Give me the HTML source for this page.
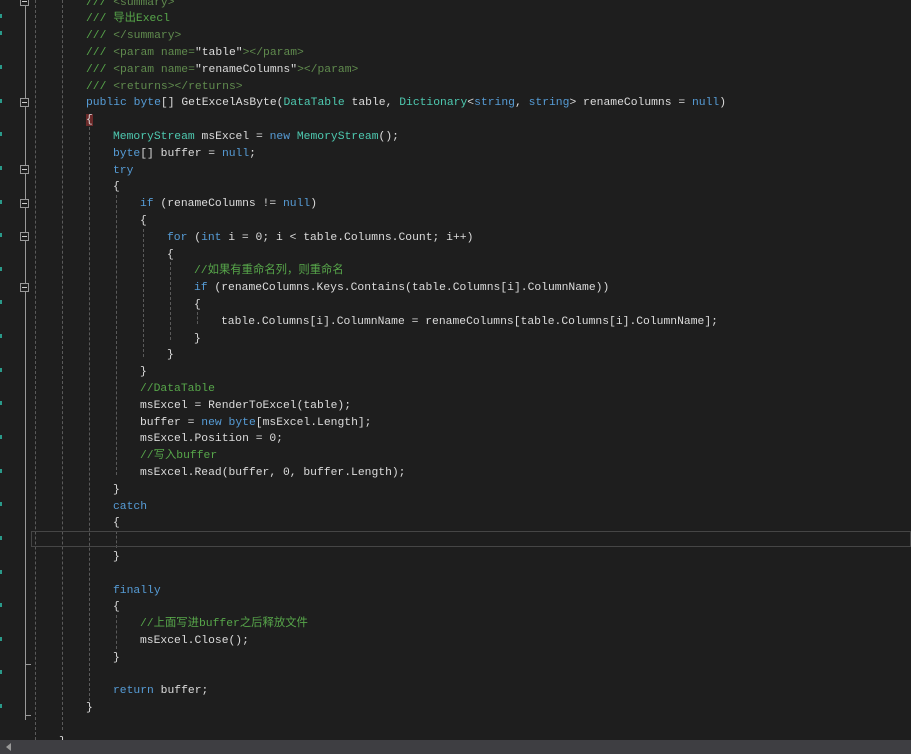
<!DOCTYPE html>
<html><head><meta charset="utf-8"><style>
body{margin:0;width:911px;height:754px;background:#1e1e1e;overflow:hidden;position:relative;font-family:"Liberation Mono","Noto Sans CJK SC",monospace;font-size:11.35px;color:#dcdcdc}
.l{position:absolute;left:0;height:16.8px;line-height:16.8px;white-space:pre;margin-top:1.5px}
.c{color:#57a64a}.k{color:#569cd6}.t{color:#4ec9b0}.g{color:#608b4e}
.gd{position:absolute;width:0;border-left:1px dashed #5a5a5a}
.fb{position:absolute;left:20px;width:9px;height:9px;border:1px solid #999;background:#1e1e1e;box-sizing:border-box}
.fb:after{content:"";position:absolute;left:1px;top:3px;width:5px;height:1px;background:#ccc}
.dot{position:absolute;left:0;width:2px;height:4px;background:#2a9a8a}
</style></head><body>
<div style="position:absolute;left:25px;top:0;width:1px;height:720px;background:#999"></div>
<div style="position:absolute;left:25px;top:664px;width:6px;height:1px;background:#999"></div>
<div style="position:absolute;left:25px;top:715px;width:6px;height:1px;background:#999"></div>
<div class="gd" style="left:35px;top:0;height:740px"></div>
<div class="gd" style="left:62px;top:0;height:730px"></div>
<div class="gd" style="left:89px;top:127px;height:574px"></div>
<div class="gd" style="left:116px;top:195px;height:280px"></div>
<div class="gd" style="left:116px;top:531px;height:17px"></div>
<div class="gd" style="left:116px;top:615px;height:34px"></div>
<div class="gd" style="left:143px;top:229px;height:128px"></div>
<div class="gd" style="left:170px;top:262px;height:78px"></div>
<div class="gd" style="left:197px;top:312px;height:12px"></div>
<div style="position:absolute;left:31px;top:531px;width:880px;height:16px;border:1px solid #464646;box-sizing:border-box"></div>
<div class="fb" style="top:-3px"></div>
<div class="fb" style="top:98px"></div>
<div class="fb" style="top:165px"></div>
<div class="fb" style="top:199px"></div>
<div class="fb" style="top:232px"></div>
<div class="fb" style="top:283px"></div>
<div class="dot" style="top:14px"></div><div class="dot" style="top:31px"></div><div class="dot" style="top:65px"></div><div class="dot" style="top:99px"></div><div class="dot" style="top:132px"></div><div class="dot" style="top:166px"></div><div class="dot" style="top:200px"></div><div class="dot" style="top:233px"></div><div class="dot" style="top:267px"></div><div class="dot" style="top:300px"></div><div class="dot" style="top:334px"></div><div class="dot" style="top:368px"></div><div class="dot" style="top:401px"></div><div class="dot" style="top:435px"></div><div class="dot" style="top:469px"></div><div class="dot" style="top:502px"></div><div class="dot" style="top:536px"></div><div class="dot" style="top:570px"></div><div class="dot" style="top:603px"></div><div class="dot" style="top:637px"></div><div class="dot" style="top:670px"></div><div class="dot" style="top:704px"></div>

<div class="l" style="top:-7px;left:86px"><span class="c">/// </span><span class="g">&lt;summary&gt;</span></div>
<div class="l" style="top:9.8px;left:86px"><span class="c">/// 导出Execl</span></div>
<div class="l" style="top:26.6px;left:86px"><span class="c">/// </span><span class="g">&lt;/summary&gt;</span></div>
<div class="l" style="top:43.4px;left:86px"><span class="c">/// </span><span class="g">&lt;param name=</span>"table"<span class="g">&gt;&lt;/param&gt;</span></div>
<div class="l" style="top:60.2px;left:86px"><span class="c">/// </span><span class="g">&lt;param name=</span>"renameColumns"<span class="g">&gt;&lt;/param&gt;</span></div>
<div class="l" style="top:77px;left:86px"><span class="c">/// </span><span class="g">&lt;returns&gt;&lt;/returns&gt;</span></div>
<div class="l" style="top:93.8px;left:86px"><span class="k">public</span> <span class="k">byte</span>[] GetExcelAsByte(<span class="t">DataTable</span> table, <span class="t">Dictionary</span>&lt;<span class="k">string</span>, <span class="k">string</span>&gt; renameColumns = <span class="k">null</span>)</div>
<div class="l" style="top:110.6px;left:86px"><span style="background:#6b2a2a">{</span></div>
<div class="l" style="top:127.4px;left:113px"><span class="t">MemoryStream</span> msExcel = <span class="k">new</span> <span class="t">MemoryStream</span>();</div>
<div class="l" style="top:144.2px;left:113px"><span class="k">byte</span>[] buffer = <span class="k">null</span>;</div>
<div class="l" style="top:161px;left:113px"><span class="k">try</span></div>
<div class="l" style="top:177.8px;left:113px">{</div>
<div class="l" style="top:194.6px;left:140px"><span class="k">if</span> (renameColumns != <span class="k">null</span>)</div>
<div class="l" style="top:211.4px;left:140px">{</div>
<div class="l" style="top:228.2px;left:167px"><span class="k">for</span> (<span class="k">int</span> i = 0; i &lt; table.Columns.Count; i++)</div>
<div class="l" style="top:245px;left:167px">{</div>
<div class="l" style="top:261.8px;left:194px"><span class="c">//如果有重命名列，则重命名</span></div>
<div class="l" style="top:278.6px;left:194px"><span class="k">if</span> (renameColumns.Keys.Contains(table.Columns[i].ColumnName))</div>
<div class="l" style="top:295.4px;left:194px">{</div>
<div class="l" style="top:312.2px;left:221px">table.Columns[i].ColumnName = renameColumns[table.Columns[i].ColumnName];</div>
<div class="l" style="top:329px;left:194px">}</div>
<div class="l" style="top:345.8px;left:167px">}</div>
<div class="l" style="top:362.6px;left:140px">}</div>
<div class="l" style="top:379.4px;left:140px"><span class="c">//DataTable</span></div>
<div class="l" style="top:396.2px;left:140px">msExcel = RenderToExcel(table);</div>
<div class="l" style="top:413px;left:140px">buffer = <span class="k">new</span> <span class="k">byte</span>[msExcel.Length];</div>
<div class="l" style="top:429.8px;left:140px">msExcel.Position = 0;</div>
<div class="l" style="top:446.6px;left:140px"><span class="c">//写入buffer</span></div>
<div class="l" style="top:463.4px;left:140px">msExcel.Read(buffer, 0, buffer.Length);</div>
<div class="l" style="top:480.2px;left:113px">}</div>
<div class="l" style="top:497px;left:113px"><span class="k">catch</span></div>
<div class="l" style="top:513.8px;left:113px">{</div>
<div class="l" style="top:547.4px;left:113px">}</div>
<div class="l" style="top:581px;left:113px"><span class="k">finally</span></div>
<div class="l" style="top:597.8px;left:113px">{</div>
<div class="l" style="top:614.6px;left:140px"><span class="c">//上面写进buffer之后释放文件</span></div>
<div class="l" style="top:631.4px;left:140px">msExcel.Close();</div>
<div class="l" style="top:648.2px;left:113px">}</div>
<div class="l" style="top:681.8px;left:113px"><span class="k">return</span> buffer;</div>
<div class="l" style="top:698.6px;left:86px">}</div>
<div class="l" style="top:732.2px;left:59px">}</div>
<div style="position:absolute;left:0;top:740px;width:911px;height:14px;background:#3e3e42"></div>
<div style="position:absolute;left:6px;top:743px;width:0;height:0;border-top:4px solid transparent;border-bottom:4px solid transparent;border-right:5px solid #999"></div>
</body></html>
